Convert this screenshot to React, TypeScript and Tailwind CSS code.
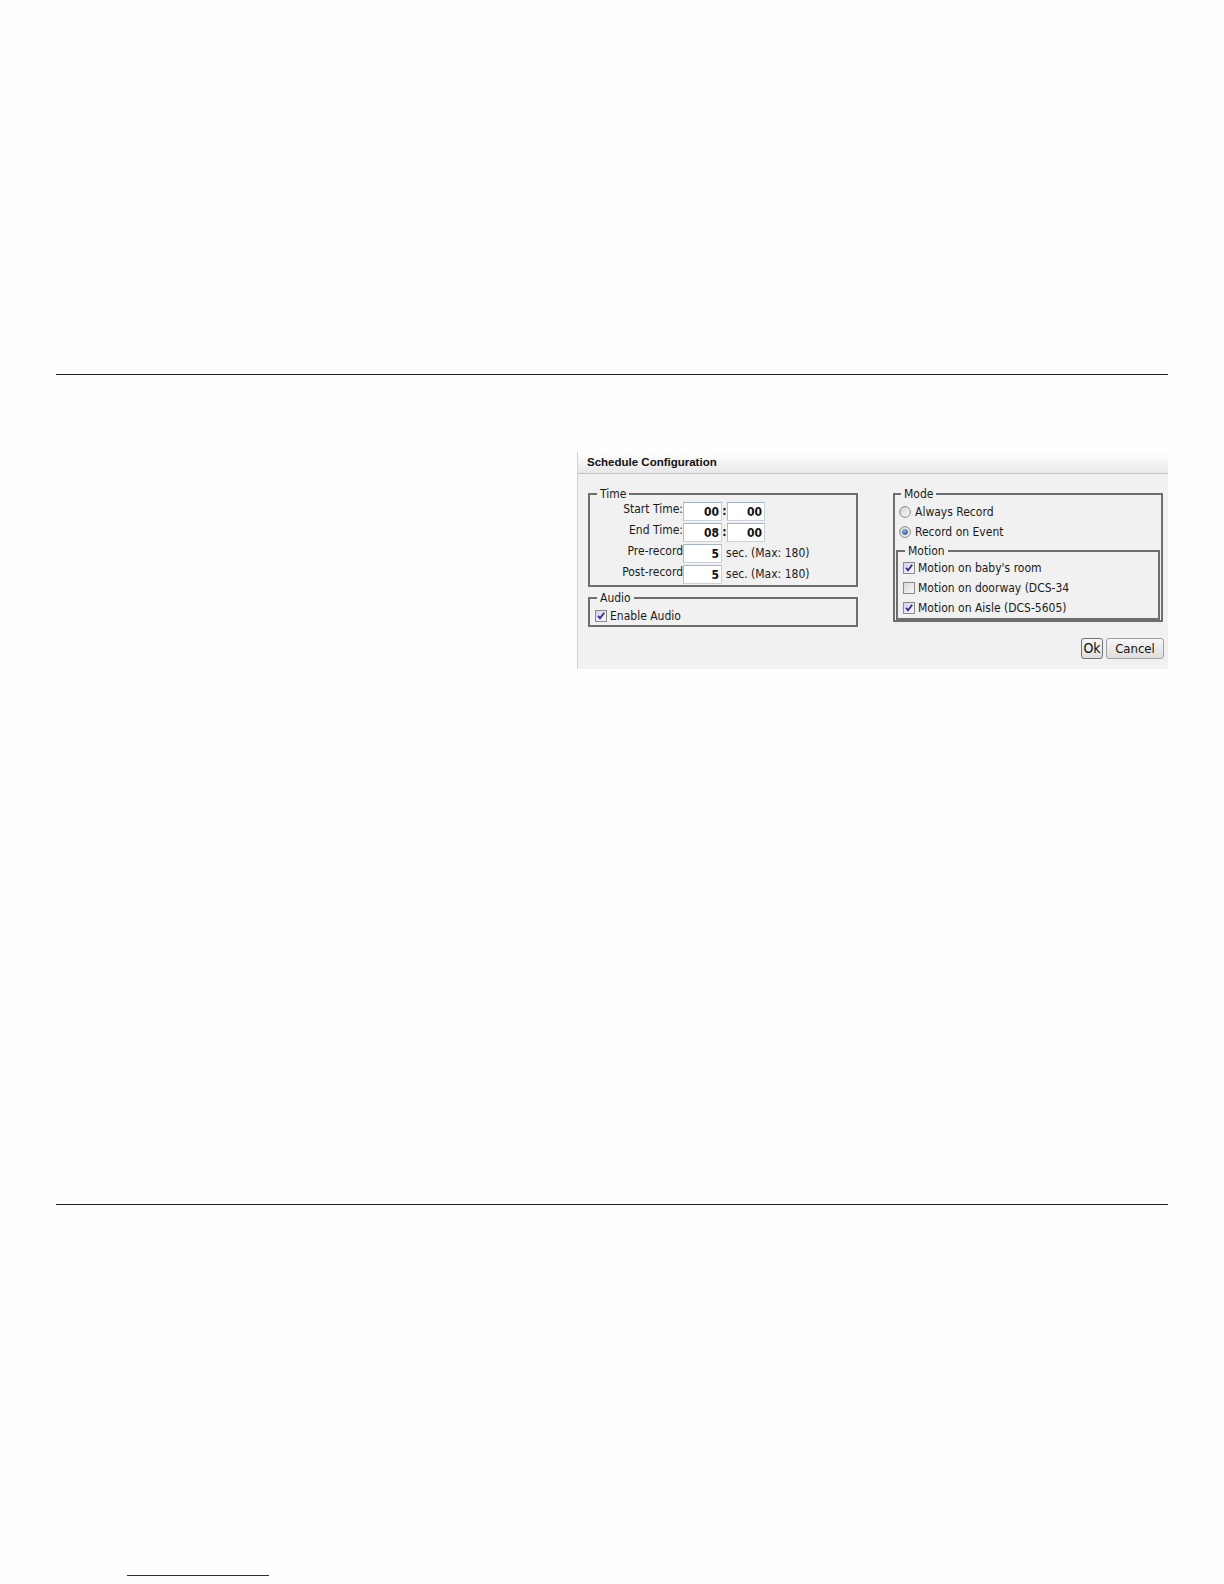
import React from 'react';

function CheckBox({ checked }: { checked: boolean }) {
  return (
    <svg width="12" height="12" viewBox="0 0 12 12" className="shrink-0">
      <defs>
        <linearGradient id={checked ? 'cbOn' : 'cbOff'} x1="0" y1="0" x2="1" y2="1">
          <stop offset="0" stopColor={checked ? '#d0d0ec' : '#d6d6d6'} />
          <stop offset="1" stopColor="#fbfbfb" />
        </linearGradient>
      </defs>
      <rect x="0.5" y="0.5" width="11" height="11" fill={`url(#${checked ? 'cbOn' : 'cbOff'})`} stroke="#8a8a8a" />
      {checked && <path d="M3 5.8 L5 8.3 L9.2 2.8" fill="none" stroke="#2a2a9c" strokeWidth="1.8" />}
    </svg>
  );
}

function Radio({ checked }: { checked: boolean }) {
  return (
    <svg width="12" height="12" viewBox="0 0 12 12" className="shrink-0">
      <defs>
        <linearGradient id="rdBg" x1="0" y1="0" x2="1" y2="1">
          <stop offset="0" stopColor="#d2d2d2" />
          <stop offset="1" stopColor="#fafafa" />
        </linearGradient>
        <radialGradient id="rdDot" cx="0.4" cy="0.35" r="0.7">
          <stop offset="0" stopColor="#8fc0f0" />
          <stop offset="1" stopColor="#123f86" />
        </radialGradient>
      </defs>
      <circle cx="6" cy="6" r="5.4" fill="url(#rdBg)" stroke="#8a8a8a" strokeWidth="1" />
      {checked && <circle cx="6" cy="6" r="2.8" fill="url(#rdDot)" />}
    </svg>
  );
}

function Box({ value, wide }: { value: string; wide?: boolean }) {
  return (
    <div
      className={`${wide ? 'w-[38px]' : 'w-[39px]'} h-[19px] bg-white border border-[#c9d2dc] border-t-[#a4b4c5] border-l-[#b0bece] flex items-center justify-end pr-[2px] font-bold text-[12px] text-[#111]`}
    >
      {value}
    </div>
  );
}

export default function App() {
  const timeRows = [
    { label: 'Start Time:', a: '00', b: '00' },
    { label: 'End Time:', a: '08', b: '00' },
  ];
  const motions = [
    { label: "Motion on baby's room", on: true },
    { label: 'Motion on doorway (DCS-34', on: false },
    { label: 'Motion on Aisle (DCS-5605)', on: true },
  ];

  return (
    <div className="w-full min-h-screen bg-[#fefefe] flex flex-col font-['DejaVu_Sans_Condensed','Liberation_Sans',sans-serif] text-[#1a1a1a]">
      <div className="h-[374px] shrink-0" />
      <div className="ml-[56px] w-[1112px] border-t border-[#231f20]" />
      <div className="h-[77px] shrink-0" />

      {/* dialog */}
      <div className="ml-[577px] w-[591px] h-[217px] shrink-0 flex flex-col bg-[#f1f1f1] border-l border-[#d0d0d0]">
        <div className="h-[22px] shrink-0 bg-gradient-to-b from-white to-[#e8e8e8] border-b border-[#c2c2c2] flex items-center pl-[9px] font-['Liberation_Sans',Arial,sans-serif] text-[11.5px] font-bold text-[#111]">
          Schedule Configuration
        </div>
        <div className="flex-1 flex flex-col pl-[10px] pt-[13px]">
          <div className="flex items-start gap-[35px]">
            {/* left column */}
            <div className="w-[270px] flex flex-col">
              <fieldset className="border-2 border-[#6e6e6e]">
                <legend className="ml-[7px] px-[3px] text-[12px] leading-[14px]">Time</legend>
                <div className="flex flex-col gap-[2px] pt-[1px] pb-[1px]">
                  {timeRows.map((r) => (
                    <div key={r.label} className="flex h-[19px] items-start">
                      <div className="w-[93px] text-right text-[12px] leading-[15px]">{r.label}</div>
                      <Box value={r.a} />
                      <div className="w-[5px] text-center font-bold text-[12px] leading-[19px]">:</div>
                      <Box value={r.b} wide />
                    </div>
                  ))}
                  {['Pre-record', 'Post-record'].map((l) => (
                    <div key={l} className="flex h-[19px] items-start">
                      <div className="w-[93px] text-right text-[12px] leading-[15px]">{l}</div>
                      <Box value="5" />
                      <div className="pl-[4px] text-[12px] leading-[19px]">sec. (Max: 180)</div>
                    </div>
                  ))}
                </div>
              </fieldset>
              <fieldset className="mt-[4px] border-2 border-[#6e6e6e]">
                <legend className="ml-[7px] px-[3px] text-[12px] leading-[14px]">Audio</legend>
                <div className="pt-[2px] pb-[1px] pl-[5px]">
                  <div className="h-[17px] flex items-center gap-[3px] text-[12px]">
                    <CheckBox checked />
                    <span>Enable Audio</span>
                  </div>
                </div>
              </fieldset>
            </div>

            {/* right column */}
            <fieldset className="w-[270px] border-2 border-[#6e6e6e]">
              <legend className="ml-[6px] px-[3px] text-[12px] leading-[14px]">Mode</legend>
              <div className="pt-[1px] pl-[4px] flex flex-col">
                <div className="h-[20px] flex items-center gap-[4px] text-[12px]">
                  <Radio checked={false} />
                  <span>Always Record</span>
                </div>
                <div className="h-[20px] flex items-center gap-[4px] text-[12px]">
                  <Radio checked />
                  <span>Record on Event</span>
                </div>
              </div>
              <fieldset className="mt-[2px] mx-[1px] border-2 border-[#6e6e6e]">
                <legend className="ml-[7px] px-[3px] text-[12px] leading-[14px]">Motion</legend>
                <div className="pl-[5px] flex flex-col">
                  {motions.map((m) => (
                    <div key={m.label} className="h-[20px] flex items-center gap-[3px] text-[12px]">
                      <CheckBox checked={m.on} />
                      <span>{m.label}</span>
                    </div>
                  ))}
                </div>
              </fieldset>
            </fieldset>
          </div>

          <div className="mt-[11px] flex justify-end gap-[3px] pr-[4px]">
            <button className="h-[21px] w-[22px] border border-[#707070] rounded-[3px] bg-gradient-to-b from-[#f7f7f7] to-[#dedede] text-[14px] leading-[19px] text-[#111] p-0">
              Ok
            </button>
            <button className="h-[21px] w-[58px] border border-[#a0a0a0] rounded-[3px] bg-gradient-to-b from-[#f7f7f7] to-[#dedede] text-[13px] leading-[19px] text-[#111] p-0">
              Cancel
            </button>
          </div>
        </div>
      </div>

      <div className="h-[535px] shrink-0" />
      <div className="ml-[56px] w-[1112px] border-t border-[#231f20]" />
      <div className="h-[370px] shrink-0" />
      <div className="ml-[127px] w-[142px] border-t border-[#1e2298]" />
    </div>
  );
}
